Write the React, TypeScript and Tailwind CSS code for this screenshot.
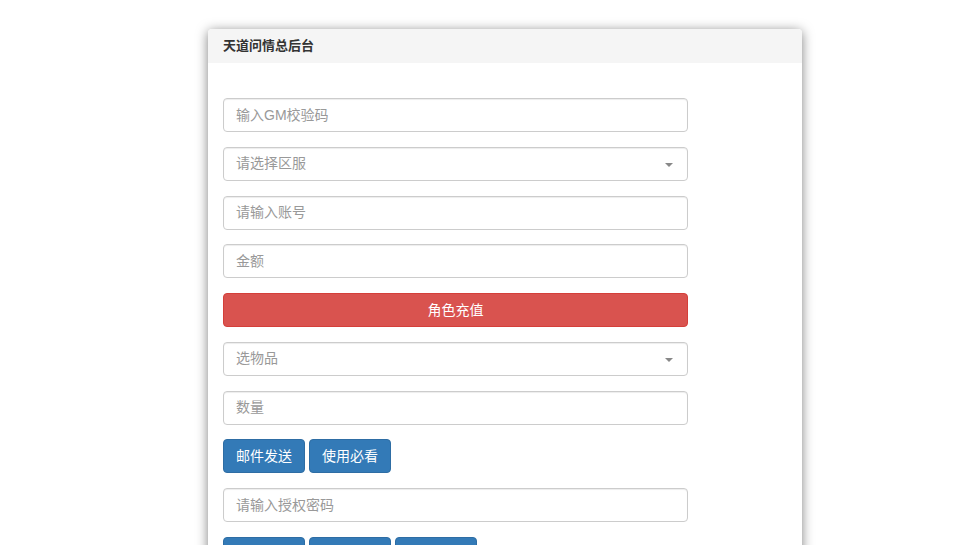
import React from "react";

const font = { fontFamily: '"Liberation Sans", "Noto Sans CJK SC", sans-serif' };

function Field({ placeholder, select }: { placeholder: string; select?: boolean }) {
  return (
    <div className="relative h-[34px] w-[465px] rounded-[4px] border border-[#cccccc] bg-white shadow-[inset_0_1px_1px_rgba(0,0,0,0.075)] flex items-center px-[12px]">
      <span className="text-[14px] text-[#999999]">{placeholder}</span>
      {select && (
        <span className="absolute right-[14px] top-[15px] h-0 w-0 border-x-[4px] border-t-[4px] border-x-transparent border-t-[#888888]" />
      )}
    </div>
  );
}

function Btn({ label }: { label: string }) {
  return (
    <div className="h-[34px] w-[82px] rounded-[4px] border border-[#2e6da4] bg-[#337ab7] text-white text-[14px] flex items-center justify-center">
      {label}
    </div>
  );
}

export default function App() {
  return (
    <div className="min-h-[545px] bg-white pt-[29px] pl-[208px]" style={font}>
      <div className="w-[594px] rounded-[4px] bg-white shadow-[0_2px_12px_rgba(0,0,0,0.5)] overflow-hidden">
        <div className="h-[34px] bg-[#f5f5f5] px-[15px] flex items-center">
          <span className="text-[13px] font-bold text-[#333333]">天道问情总后台</span>
        </div>
        <div className="pl-[15px] pt-[35px] pb-[20px] flex flex-col gap-[14.75px]">
          <Field placeholder="输入GM校验码" />
          <Field placeholder="请选择区服" select />
          <Field placeholder="请输入账号" />
          <Field placeholder="金额" />
          <div className="h-[34px] w-[465px] rounded-[4px] border border-[#d43f3a] bg-[#d9534f] text-white text-[14px] flex items-center justify-center">
            角色充值
          </div>
          <Field placeholder="选物品" select />
          <Field placeholder="数量" />
          <div className="flex gap-[4px]">
            <Btn label="邮件发送" />
            <Btn label="使用必看" />
          </div>
          <Field placeholder="请输入授权密码" />
          <div className="flex gap-[4px]">
            <Btn label="授权查询" />
            <Btn label="授权添加" />
            <Btn label="授权删除" />
          </div>
        </div>
      </div>
    </div>
  );
}
